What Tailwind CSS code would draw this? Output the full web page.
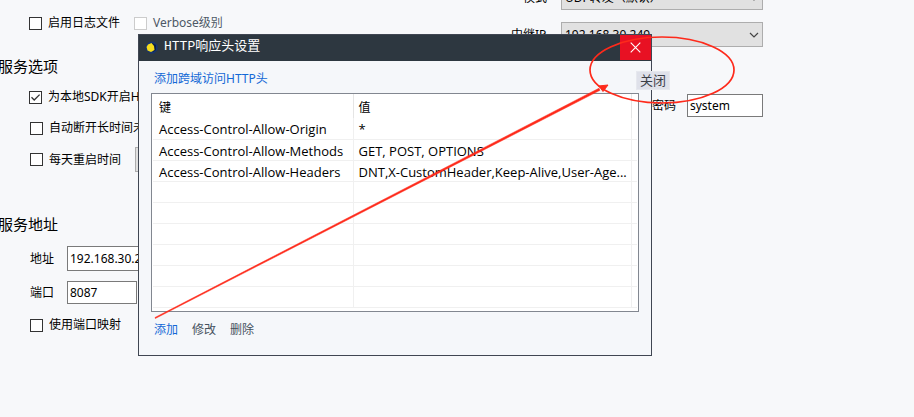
<!DOCTYPE html>
<html lang="zh-CN">
<head>
<meta charset="utf-8">
<meta name="viewport" content="width=device-width, initial-scale=1">
<title>HTTP响应头设置</title>
<script src="https://cdn.jsdelivr.net/npm/@tailwindcss/browser@4"></script>
</head>
<body class="relative h-screen overflow-hidden bg-[#f7f8fa] font-['Noto_Sans','Noto_Sans_CJK_SC',sans-serif] text-xs text-black">

<main class="flex">
  <form class="w-[511px] shrink-0 pt-[13px]">
    <div class="flex h-5 items-center gap-[14px] pl-[29px]">
      <label class="flex items-center gap-[6px]"><input type="checkbox" class="size-[13px] appearance-none border border-[#333] bg-white">启用日志文件</label>
      <label class="flex items-center gap-[6px] text-[#4d5866]"><input type="checkbox" disabled class="size-[13px] appearance-none border border-[#ccc] bg-white">Verbose级别</label>
    </div>

    <h2 class="-ml-[2px] mt-[21px] flex h-6 items-center text-[15px]">服务选项</h2>
    <div class="mt-[9px] flex h-5 items-center pl-[29px]">
      <label class="flex items-center gap-[6px]">
        <span class="grid size-[13px]">
          <input type="checkbox" checked class="col-start-1 row-start-1 size-[13px] appearance-none border border-[#333] bg-white">
          <svg class="pointer-events-none z-0 col-start-1 row-start-1" width="13" height="13" viewBox="0 0 13 13" fill="none" stroke="#333" stroke-width="1.3"><path d="M2.5 6.3 5.2 9 10.6 3.6"/></svg>
        </span>为本地SDK开启H</label>
    </div>
    <div class="mt-[11px] flex h-5 items-center pl-[30px]">
      <label class="flex items-center gap-[6px]"><input type="checkbox" class="size-[13px] appearance-none border border-[#333] bg-white">自动断开长时间未</label>
    </div>
    <div class="mt-[9px] flex h-[25px] items-center gap-[14px] pl-[30px]">
      <label class="flex items-center gap-[6px]"><input type="checkbox" class="size-[13px] appearance-none border border-[#333] bg-white">每天重启时间</label>
      <select aria-label="重启时间" class="h-[25px] w-20 appearance-none border border-[#adadad] bg-[#e1e1e1] px-1"><option></option></select>
    </div>

    <h2 class="-ml-[2px] mt-10 flex h-6 items-center text-[15px]">服务地址</h2>
    <div class="mt-[10px] flex items-center pl-[30px]">
      <label for="address" class="w-[37px]">地址</label>
      <input id="address" type="text" value="192.168.30.249" class="h-[25px] w-[140px] border border-[#7a7a7a] bg-white px-[2px]">
    </div>
    <div class="mt-[10px] flex items-center pl-[30px]">
      <label for="port" class="w-[37px]">端口</label>
      <input id="port" type="text" value="8087" class="h-[23px] w-[70px] border border-[#7a7a7a] bg-white px-[2px]">
    </div>
    <div class="mt-[11px] flex h-5 items-center pl-[30px]">
      <label class="flex items-center gap-[6px]"><input type="checkbox" class="size-[13px] appearance-none border border-[#333] bg-white">使用端口映射</label>
    </div>
  </form>

  <form class="-mt-[15px] w-[252px] shrink-0">
    <div class="flex items-center">
      <label for="mode" class="w-[50px] pl-3">模式</label>
      <div class="grid grow items-center">
        <select id="mode" class="col-start-1 row-start-1 h-[25px] appearance-none border border-[#adadad] bg-[#e1e1e1] px-[3px]"><option>UDP转发（默认）</option></select>
        <svg class="pointer-events-none col-start-1 row-start-1 mr-1 justify-self-end" width="10" height="6" viewBox="0 0 10 6" fill="none" stroke="#444" stroke-width="1.2"><path d="M1 1 5 5 9 1"/></svg>
      </div>
    </div>
    <div class="mt-3 flex items-center">
      <label for="relay" class="w-[50px]">中继IP</label>
      <div class="grid grow items-center">
        <select id="relay" class="col-start-1 row-start-1 h-[25px] appearance-none border border-[#adadad] bg-[#e1e1e1] px-[3px]"><option>192.168.30.249</option></select>
        <svg class="pointer-events-none col-start-1 row-start-1 mr-1 justify-self-end" width="10" height="6" viewBox="0 0 10 6" fill="none" stroke="#444" stroke-width="1.2"><path d="M1 1 5 5 9 1"/></svg>
      </div>
    </div>
    <div class="mt-[47px] flex items-center justify-end">
      <label for="password" class="w-[35px]">密码</label>
      <input id="password" type="text" value="system" class="h-[23px] w-[76px] border border-[#7a7a7a] bg-white px-[2px]">
    </div>
  </form>
</main>

<section role="dialog" aria-labelledby="dialog-title" class="absolute top-[34px] left-[138px] w-[514px] border border-[#404652] bg-[#f5f7fa]">
  <header class="flex h-[26px] items-start bg-[#2d3740] pl-[6px] text-white">
    <svg class="mt-[6px]" width="13" height="13" viewBox="0 0 13 13"><path d="M4 1 9 .5 12.500 4 12.500 9 9 12.500 5 12.500 .7 9 1 4Z" fill="#17356f"/><path d="M7 2 11 4 11 9 8 11Z" fill="#0b1c45"/><path d="M3 3.500 6.500 2 9 5 9.500 9 6 11 2.500 9.500 1.500 6Z" fill="#f5dc1c"/></svg>
    <h1 id="dialog-title" class="ml-[6px] pt-[2px] font-['Liberation_Mono','Noto_Sans_CJK_SC',monospace] text-[13px] leading-5">HTTP响应头设置</h1>
    <button type="button" aria-label="关闭" class="ml-auto grid h-[25px] w-[31px] place-items-center bg-[#e81123]">
      <svg width="11" height="11" viewBox="0 0 11 11" stroke="#fff" stroke-width="1.1"><path d="M.7.7 10.3 10.3M10.3.7.7 10.3"/></svg>
    </button>
  </header>
  <div class="px-3 pb-[15px]">
    <div class="flex h-8 items-center pt-1 pl-[3px]"><a href="#" class="text-[#1368d6]">添加跨域访问HTTP头</a></div>
    <div class="border border-[#828790] bg-white px-px pb-[3px]">
      <table class="w-full table-fixed border-collapse text-left whitespace-nowrap">
        <colgroup><col class="w-[200px]"><col class="w-[278px]"><col></colgroup>
        <thead>
          <tr class="h-6"><th class="border-r border-[#e5e5e5] p-0 pt-[3px] pl-[6px] font-normal">键</th><th class="border-r border-[#e5e5e5] p-0 pt-[3px] pl-[5px] font-normal">值</th><td class="p-0"></td></tr>
        </thead>
        <tbody class="font-['Open_Sans','Noto_Sans_CJK_SC',sans-serif] text-[13px] leading-[18px]">
          <tr class="h-[21px] border-b border-[#f0f0f0]"><td class="border-r border-[#f0f0f0] p-0 pt-[2px] pl-[6px]">Access-Control-Allow-Origin</td><td class="border-r border-[#f0f0f0] p-0 pt-[2px] pl-[5px]">*</td><td class="p-0"></td></tr>
          <tr class="h-[21px] border-b border-[#f0f0f0]"><td class="border-r border-[#f0f0f0] p-0 pt-[2px] pl-[6px]">Access-Control-Allow-Methods</td><td class="border-r border-[#f0f0f0] p-0 pt-[2px] pl-[5px]">GET, POST, OPTIONS</td><td class="p-0"></td></tr>
          <tr class="h-[21px] border-b border-[#f0f0f0]"><td class="border-r border-[#f0f0f0] p-0 pt-[2px] pl-[6px]">Access-Control-Allow-Headers</td><td class="border-r border-[#f0f0f0] p-0 pt-[2px] pl-[5px]">DNT,X-CustomHeader,Keep-Alive,User-Age...</td><td class="p-0"></td></tr>
          <tr class="h-[21px] border-b border-[#f0f0f0]"><td class="border-r border-[#f0f0f0] p-0"></td><td class="border-r border-[#f0f0f0] p-0"></td><td class="p-0"></td></tr>
          <tr class="h-[21px] border-b border-[#f0f0f0]"><td class="border-r border-[#f0f0f0] p-0"></td><td class="border-r border-[#f0f0f0] p-0"></td><td class="p-0"></td></tr>
          <tr class="h-[21px] border-b border-[#f0f0f0]"><td class="border-r border-[#f0f0f0] p-0"></td><td class="border-r border-[#f0f0f0] p-0"></td><td class="p-0"></td></tr>
          <tr class="h-[21px] border-b border-[#f0f0f0]"><td class="border-r border-[#f0f0f0] p-0"></td><td class="border-r border-[#f0f0f0] p-0"></td><td class="p-0"></td></tr>
          <tr class="h-[21px] border-b border-[#f0f0f0]"><td class="border-r border-[#f0f0f0] p-0"></td><td class="border-r border-[#f0f0f0] p-0"></td><td class="p-0"></td></tr>
          <tr class="h-[21px] border-b border-[#f0f0f0]"><td class="border-r border-[#f0f0f0] p-0"></td><td class="border-r border-[#f0f0f0] p-0"></td><td class="p-0"></td></tr>
        </tbody>
      </table>
    </div>
    <div class="mt-2 flex h-5 items-center gap-[14px] pt-px pl-[3px] text-[#46525e]">
      <button type="button" class="text-[#1368d6]">添加</button>
      <button type="button">修改</button>
      <button type="button">删除</button>
    </div>
  </div>
</section>

<div role="tooltip" class="absolute top-[71px] left-[636px] border border-[#e6e8ee] bg-[#dfe1ea] px-[3px] text-[13px] leading-[17px] text-[#3c4048]">关闭</div>

<svg class="pointer-events-none absolute top-0 left-0" width="914" height="417" viewBox="0 0 914 417" aria-hidden="true">
  <ellipse cx="662" cy="70" rx="72" ry="33" fill="none" stroke="#fe2a1b" stroke-width="1.7"/>
  <path d="M155 317.500 599 88.200 600 90.300 155.300 318.500Z" fill="#fe2a1b" stroke="#fe2a1b" stroke-width=".5"/>
  <path d="M608 85 598.500 86 600.500 88 603 91.500Z" fill="#fe2a1b" stroke="#fe2a1b"/>
</svg>
</body>
</html>
